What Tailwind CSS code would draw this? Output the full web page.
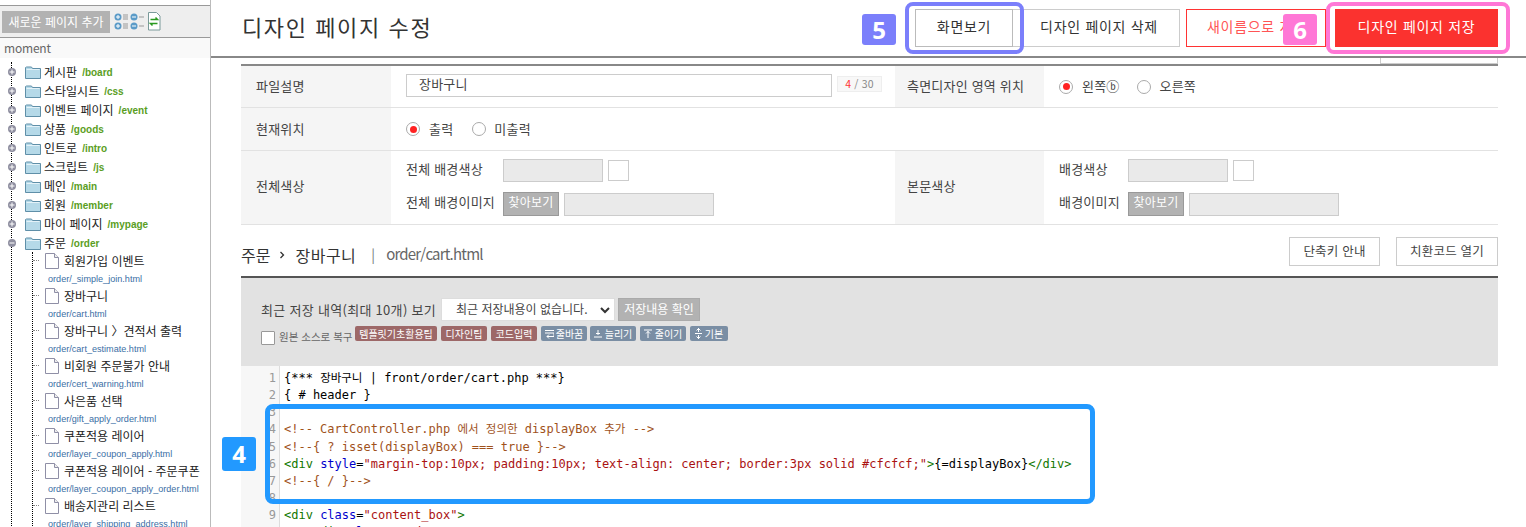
<!DOCTYPE html>
<html lang="ko">
<head>
  <meta charset="UTF-8" />
  <title>디자인 페이지 수정</title>
  <script src="https://cdn.jsdelivr.net/npm/@tailwindcss/browser@4"></script>
</head>
<body class="h-[527px] overflow-hidden flex bg-white text-[#333] font-['Noto_Sans_CJK_KR','Liberation_Sans',sans-serif]">

  <!-- Sidebar -->
  <aside class="w-[211px] shrink-0 h-[527px] overflow-hidden border-r border-[#bbb] pt-[5px]">
    <div class="h-[33px] bg-[#eee] border-y border-[#999] flex items-center pl-[2px]">
      <div class="w-[108px] h-[22px] bg-[#b2b2b2] text-white text-[12px] flex items-center justify-center">새로운 페이지 추가</div>
      <svg class="ml-[4px]" width="47" height="20" viewBox="0 0 47 20">
        <g fill="#5b9bc8"><circle cx="4" cy="5" r="3.500"/><circle cx="4" cy="14" r="3.500"/><circle cx="20" cy="5" r="3.500"/><circle cx="20" cy="14" r="3.500"/></g>
        <path d="M2 5h4M4 3v4M2 14h4M4 12v4M18 5h4M18 14h4" stroke="#fff"/>
        <path d="M9 3h5M9 5h5M9 7h5M9 12h5M9 14h5M9 16h5M25 5h5M25 14h5" stroke="#999"/>
        <path d="M34.500 .5h8l3.500 3.500v14h-11.500z" fill="#fff" stroke="#7a9a9a"/>
        <path d="M36.500 7.500h7l-2-2M43.500 11.500h-7l2 2" fill="none" stroke="#2a9a20" stroke-width="1.500"/>
      </svg>
    </div>
    <div class="h-[20px] bg-[#f9f9f9] pl-[4px] text-[12px] tracking-[-0.2px] leading-[20px] text-[#666]">moment</div>
    <div id="tree" class="ml-[11px] mt-[4px] border-l border-dotted border-black"></div>
  </aside>

  <!-- Main -->
  <main class="relative w-[1315px] h-[527px] overflow-hidden">
    <header class="h-[58px] border-b-2 border-[#888] flex items-center pl-[31px]">
      <h1 class="text-[22px] tracking-[1.600px] text-[#333] mb-[4px]">디자인 페이지 수정</h1>
      <div class="ml-auto mr-[28px] flex items-center h-[38px] text-[14px] tracking-[0.700px] mb-[1px]">
        <button class="w-[98px] h-[38px] pb-[2px] border border-[#bbb]">화면보기</button>
        <button class="w-[167px] h-[38px] pb-[2px] border border-l-0 border-[#ccc] pl-[6px]">디자인 페이지 삭제</button>
        <button class="ml-[6px] w-[140px] h-[38px] pb-[2px] border border-[#f33] text-[#f55] text-left pl-[20px] whitespace-nowrap overflow-hidden">새이름으로 저장</button>
        <button class="ml-[9px] w-[163px] h-[38px] pb-[2px] bg-[#fb322f] text-white">디자인 페이지 저장</button>
      </div>
    </header>

    <!-- 폼 영역 -->
    <section class="mx-[30px] mt-[6px] w-[1257px] border-t-2 border-[#888] text-[13px] tracking-[0.200px] text-[#444]">
      <div class="h-[42px] flex border-b border-[#e2e2e2]">
        <div class="w-[150px] bg-[#f5f5f5] pl-[15px] pb-[2px] flex items-center">파일설명</div>
        <div class="w-[504px] pl-[15px] pt-[8px] flex items-start">
          <div class="w-[426px] h-[23px] border border-[#ccc] pl-[12px] leading-[17px]">장바구니</div>
          <div class="ml-[5px] w-[45px] h-[16px] mt-[2px] bg-[#f8f8f8] border border-[#eee] text-[10.500px] leading-[14px] text-center text-[#888]"><span class="text-[#f33]">4</span> / 30</div>
        </div>
        <div class="w-[149px] bg-[#f5f5f5] pl-[12px] pb-[2px] flex items-center">측면디자인 영역 위치</div>
        <div class="pl-[15px] flex items-center">
          <span class="w-[14px] h-[14px] rounded-full border border-[#aaa] flex items-center justify-center"><span class="w-[7px] h-[7px] rounded-full bg-[#f22]"></span></span>
          <span class="ml-[9px] mb-[2px]">왼쪽ⓑ</span>
          <span class="ml-[17px] w-[14px] h-[14px] rounded-full border border-[#aaa]"></span>
          <span class="ml-[9px] mb-[2px]">오른쪽</span>
        </div>
      </div>
      <div class="h-[43px] flex border-b border-[#e2e2e2]">
        <div class="w-[150px] bg-[#f5f5f5] pl-[15px] flex items-center">현재위치</div>
        <div class="pl-[15px] flex items-center">
          <span class="w-[14px] h-[14px] rounded-full border border-[#aaa] flex items-center justify-center"><span class="w-[7px] h-[7px] rounded-full bg-[#f22]"></span></span>
          <span class="ml-[9px]">출력</span>
          <span class="ml-[19px] w-[14px] h-[14px] rounded-full border border-[#aaa]"></span>
          <span class="ml-[8px]">미출력</span>
        </div>
      </div>
      <div class="h-[74px] flex border-b border-[#e2e2e2]">
        <div class="w-[150px] bg-[#f5f5f5] pl-[15px] pb-[3px] flex items-center">전체색상</div>
        <div class="w-[504px] pl-[15px] pt-[8px]">
          <div class="flex items-center h-[23px]">
            <span class="w-[97px] mb-[4px]">전체 배경색상</span>
            <span class="w-[100px] h-[23px] bg-[#eaeaea] border border-[#ccc]"></span>
            <span class="ml-[5px] w-[21px] h-[21px] border border-[#ccc]"></span>
          </div>
          <div class="flex items-center h-[24px] mt-[10px]">
            <span class="w-[97px] mb-[4px]">전체 배경이미지</span>
            <span class="w-[56px] h-[24px] bg-[#b2b2b2] border border-[#999] text-white text-[12px] leading-[17px] text-center">찾아보기</span>
            <span class="ml-[5px] w-[150px] h-[23px] bg-[#eaeaea] border border-[#ccc]"></span>
          </div>
        </div>
        <div class="w-[149px] bg-[#f5f5f5] pl-[12px] pb-[3px] flex items-center">본문색상</div>
        <div class="pl-[15px] pt-[8px]">
          <div class="flex items-center h-[23px]">
            <span class="w-[69px] mb-[4px]">배경색상</span>
            <span class="w-[100px] h-[23px] bg-[#eaeaea] border border-[#ccc]"></span>
            <span class="ml-[5px] w-[21px] h-[21px] border border-[#ccc]"></span>
          </div>
          <div class="flex items-center h-[24px] mt-[10px]">
            <span class="w-[69px] mb-[4px]">배경이미지</span>
            <span class="w-[56px] h-[24px] bg-[#b2b2b2] border border-[#999] text-white text-[12px] leading-[17px] text-center">찾아보기</span>
            <span class="ml-[5px] w-[150px] h-[23px] bg-[#eaeaea] border border-[#ccc]"></span>
          </div>
        </div>
      </div>

      <!-- 경로 -->
      <div class="h-[51px] flex items-center">
        <div class="pt-[8px] text-[16px] tracking-[0] text-[#333] flex items-center">주문<svg class="mx-[9px]" width="6" height="8" viewBox="0 0 6 8"><path d="M1.500 1l3 3-3 3" fill="none" stroke="#333" stroke-width="1.300"/></svg><span class="tracking-[0.500px] ml-[1px]">장바구니</span><span class="ml-[15px] text-[14px] text-[#777]">|</span><span class="ml-[11px] text-[15px] text-[#666] tracking-[-0.800px]">order/cart.html</span></div>
        <button class="ml-auto w-[91px] h-[29px] border border-[#ccc] text-[12.500px] mt-[1px]">단축키 안내</button>
        <button class="ml-[16px] w-[102px] h-[29px] border border-[#ccc] text-[12.500px] mt-[1px]">치환코드 열기</button>
      </div>

      <!-- 저장 내역 -->
      <div class="h-[90px] bg-[#e2e2e2] border-t-2 border-[#555] pl-[20px] pt-[20px]">
        <div class="flex items-center h-[23px]">
          <span class="w-[180px] tracking-[0.300px]">최근 저장 내역(최대 10개) 보기</span>
          <span class="w-[174px] h-[23px] bg-white border border-[#ddd] pl-[14px] text-[12px] tracking-[0] leading-[20px] relative">최근 저장내용이 없습니다.
            <svg class="absolute right-[4px] top-[8px]" width="10" height="7" viewBox="0 0 10 7"><path d="M1 1l4 4 4-4" fill="none" stroke="#333" stroke-width="2"/></svg>
          </span>
          <span class="ml-[3px] w-[82px] h-[23px] bg-[#b2b2b2] border border-[#aaa] text-white text-[12px] tracking-[0] leading-[20px] text-center">저장내용 확인</span>
        </div>
        <div class="flex items-start h-[20px] mt-[5px]">
          <span class="mt-[5px] w-[14px] h-[14px] bg-white border border-[#999] rounded-[1px]"></span>
          <span class="ml-[4px] mt-[3px] w-[73px] whitespace-nowrap text-[10.500px] text-[#666] tracking-[0]">원본 소스로 복구</span>
          <div class="ml-[3px] flex text-[10px] tracking-[0] text-white leading-[15px] text-center">
            <span class="w-[82px] h-[15px] rounded-[2px] bg-[#9d6868]">템플릿기초활용팁</span>
            <span class="ml-[4px] w-[46px] h-[15px] rounded-[2px] bg-[#9d6868]">디자인팁</span>
            <span class="ml-[4px] w-[46px] h-[15px] rounded-[2px] bg-[#9d6868]">코드입력</span>
            <span class="ml-[4px] w-[46px] h-[15px] rounded-[2px] bg-[#7a8ea4] flex items-center justify-center gap-[2px]"><svg width="9" height="10" viewBox="0 0 9 10"><path d="M0 1.500h9M0 4h9M9 4v3.500H2M4 5.500l-2 2 2 2" fill="none" stroke="#fff"/></svg>줄바꿈</span>
            <span class="ml-[3px] w-[46px] h-[15px] rounded-[2px] bg-[#7a8ea4] flex items-center justify-center gap-[3px]"><svg width="8" height="9" viewBox="0 0 8 9"><path d="M4 1v5M2 4.500h4M0 8h8" fill="none" stroke="#fff"/></svg>늘리기</span>
            <span class="ml-[4px] w-[46px] h-[15px] rounded-[2px] bg-[#7a8ea4] flex items-center justify-center gap-[3px]"><svg width="8" height="9" viewBox="0 0 8 9"><path d="M0 1h8M4 2v7M2 4.500l2-2 2 2" fill="none" stroke="#fff"/></svg>줄이기</span>
            <span class="ml-[4px] w-[38px] h-[15px] rounded-[2px] bg-[#7a8ea4] flex items-center justify-center gap-[3px]"><svg width="7" height="11" viewBox="0 0 7 11"><path d="M3.500 0v4M1.500 2.500l2-2 2 2M3.500 7v4M1.500 8.500l2 2 2-2M0 5.500h7" fill="none" stroke="#fff"/></svg>기본</span>
          </div>
        </div>
      </div>

      <!-- 코드 에디터 -->
      <div class="flex h-[165px] pt-[4px] font-['DejaVu_Sans_Mono','Noto_Sans_CJK_KR',monospace] text-[12px] tracking-[0] leading-[17.150px]">
        <div id="gutter" class="w-[39px] -mt-[4px] pt-[4px] bg-[#f7f7f7] border-r border-[#ddd] pr-[3px] text-right text-[#999]"></div>
        <pre id="code" class="pl-[4px] font-['DejaVu_Sans_Mono','Noto_Sans_CJK_KR',monospace] text-black"></pre>
      </div>
    </section>

    <!-- 헤더 아래로 비치는 버튼 -->
    <div class="absolute left-[1169px] top-[58px] w-[118px] h-[6px] border border-t-0 border-[#ccc]"></div>

    <!-- 안내 표시 -->
    <div class="absolute left-[651px] top-[14px] w-[34px] h-[31px] rounded-[3px] bg-[#7b7ffb] text-white text-[24px] font-bold flex items-center justify-center font-['Open_Sans',sans-serif]">5</div>
    <div class="absolute left-[694px] top-[2px] w-[119px] h-[52px] rounded-[8px] border-4 border-[#7b7ffb]"></div>
    <div class="absolute left-[1072px] top-[14px] w-[34px] h-[31px] rounded-[3px] bg-[#ff77d6] text-white text-[24px] font-bold flex items-center justify-center font-['Open_Sans',sans-serif]">6</div>
    <div class="absolute left-[1115px] top-[2px] w-[184px] h-[52px] rounded-[8px] border-4 border-[#ff77d6]"></div>
    <div class="absolute left-[11px] top-[437px] w-[34px] h-[34px] rounded-[3px] bg-[#2299ff] text-white text-[24px] font-bold flex items-center justify-center font-['Open_Sans',sans-serif]">4</div>
    <div class="absolute left-[54px] top-[404px] w-[830px] h-[100px] rounded-[8px] border-[5px] border-[#2299ff]"></div>
  </main>

  <script>
    const folders = [
      ['게시판', '/board'], ['스타일시트', '/css'], ['이벤트 페이지', '/event'], ['상품', '/goods'],
      ['인트로', '/intro'], ['스크립트', '/js'], ['메인', '/main'], ['회원', '/member'],
      ['마이 페이지', '/mypage'], ['주문', '/order', true]
    ];
    const files = [
      ['회원가입 이벤트', 'order/_simple_join.html'], ['장바구니', 'order/cart.html'],
      ['장바구니 〉견적서 출력', 'order/cart_estimate.html'], ['비회원 주문불가 안내', 'order/cert_warning.html'],
      ['사은품 선택', 'order/gift_apply_order.html'], ['쿠폰적용 레이어', 'order/layer_coupon_apply.html'],
      ['쿠폰적용 레이어 - 주문쿠폰', 'order/layer_coupon_apply_order.html'], ['배송지관리 리스트', 'order/layer_shipping_address.html']
    ];
    const folderIcon = `<svg width="16" height="14" viewBox="0 0 16 14"><path d="M.5 2.500v11h15v-10h-8l-1-1.500h-5z" fill="#b5d9e8" stroke="#5f8fa8"/><path d="M1.500 4.500h13" stroke="#e4f2f8"/></svg>`;
    const fileIcon = `<svg width="14" height="16" viewBox="0 0 14 16"><path d="M.5.5h9l4 4v11h-13z" fill="#fff" stroke="#8f8fa6"/><path d="M9.500.5v4h4" fill="#eee" stroke="#8f8fa6"/></svg>`;
    const toggle = (open) => `<svg class="-ml-[4px]" width="8" height="8" viewBox="0 0 8 8"><circle cx="4" cy="4" r="4" fill="#8f8fa0"/><path d="${open ? 'M1.500 4h5' : 'M1.500 4h5M4 1.500v5'}" stroke="#fff"/></svg>`;

    let tree = '';
    folders.forEach(([name, path, open]) => {
      tree += `<div class="h-[19px] flex items-center whitespace-nowrap">${toggle(open)}<span class="ml-[9px]">${folderIcon}</span><span class="ml-[3px] text-[12px] text-[#222]">${name}</span><span class="ml-[5px] mt-[2px] text-[10px] font-bold text-[#5a9e1e] font-['Liberation_Sans',sans-serif]">${path}</span></div>`;
    });
    tree += `<div class="ml-[20px] border-l border-dotted border-black">`;
    files.forEach(([name, path]) => {
      tree += `<div class="h-[35px] whitespace-nowrap"><div class="flex items-center h-[17px]"><span class="w-[6px] border-t border-dotted border-[#888]"></span><span class="ml-[6px]">${fileIcon}</span><span class="ml-[5px] text-[12px] text-[#222]">${name}</span></div><div class="ml-[15px] mt-[3px] text-[9.100px] leading-[14px] text-[#3a6ea5] font-['Liberation_Sans',sans-serif]">${path}</div></div>`;
    });
    tree += `</div>`;
    document.getElementById('tree').innerHTML = tree;

    const esc = (s) => s.replace(/</g, '&lt;');
    const ko = (s) => s.replace(/[가-힣]+/g, (m) => `<span class="text-[11.500px]">${m}</span>`);
    const cm = (s) => `<span class="text-[#a0521c]">${ko(esc(s))}</span>`;
    const tag = (s) => `<span class="text-[#170]">${esc(s)}</span>`;
    const attr = (s) => `<span class="text-[#00c]">${s}</span>`;
    const str = (s) => `<span class="text-[#a11]">${s}</span>`;
    const lines = [
      ko('{*** 장바구니 | front/order/cart.php ***}'),
      '{ # header }',
      '',
      cm('<!-- CartController.php 에서 정의한 displayBox 추가 -->'),
      cm('<!--{ ? isset(displayBox) === true }-->'),
      tag('<div ') + attr('style') + '=' + str('"margin-top:10px; padding:10px; text-align: center; border:3px solid #cfcfcf;"') + tag('>') + '{=displayBox}' + tag('</div>'),
      cm('<!--{ / }-->'),
      '',
      tag('<div ') + attr('class') + '=' + str('"content_box"') + tag('>'),
      '    ' + tag('<div ') + attr('class') + '=' + str('"order_wrap"') + tag('>')
    ];
    document.getElementById('gutter').innerHTML = lines.map((_, i) => `<div>${i + 1}</div>`).join('');
    document.getElementById('code').innerHTML = lines.join('\n');
  </script>
</body>
</html>
